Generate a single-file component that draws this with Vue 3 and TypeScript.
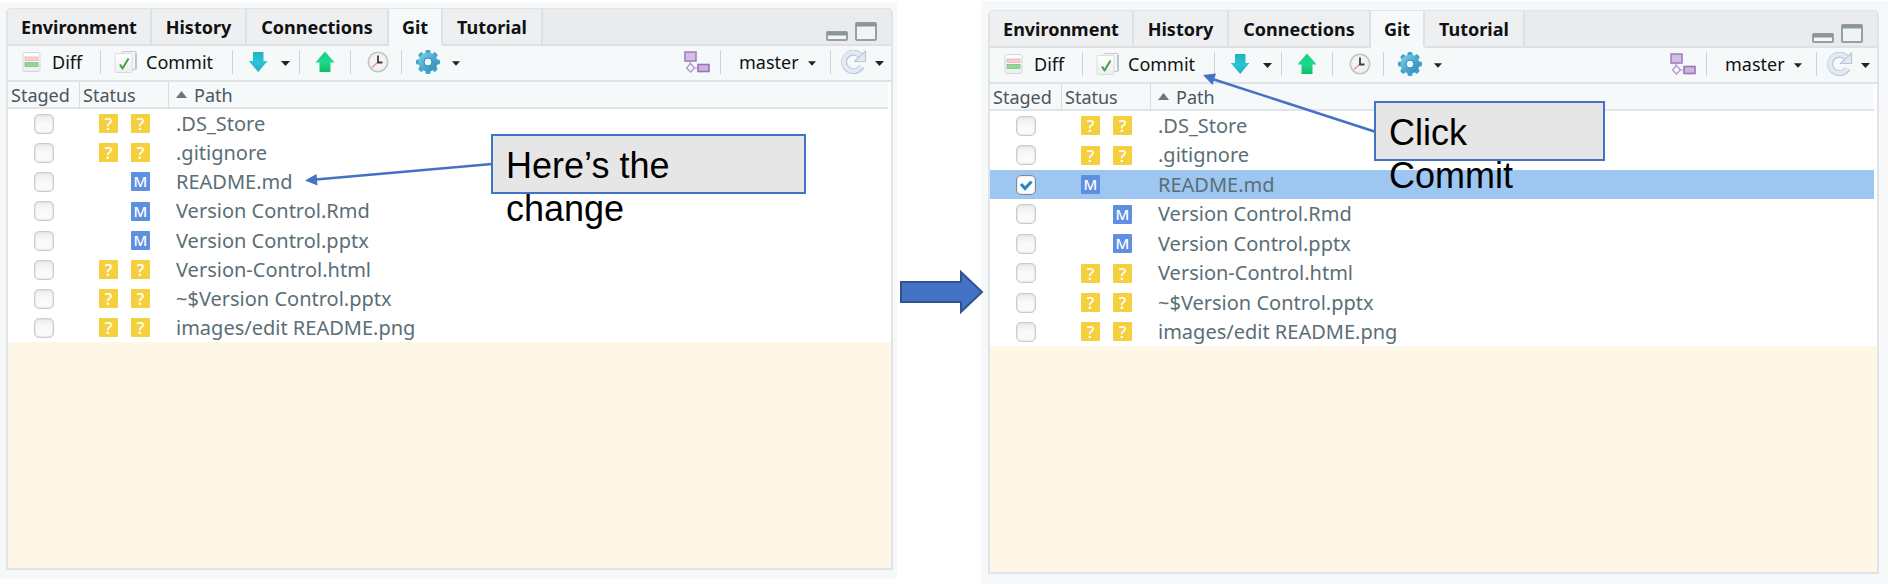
<script setup lang="ts">
import { reactive } from 'vue'

type Mark = '?' | 'M' | ''

interface FileRow {
  path: string
  marks: [Mark, Mark]
  staged: boolean
  selected?: boolean
}

interface Pane {
  id: string
  rows: FileRow[]
  note: string[]
}

const tabs = ['Environment', 'History', 'Connections', 'Git', 'Tutorial']

function files(readmeStaged: boolean): FileRow[] {
  return [
    { path: '.DS_Store', marks: ['?', '?'], staged: false },
    { path: '.gitignore', marks: ['?', '?'], staged: false },
    { path: 'README.md', marks: readmeStaged ? ['M', ''] : ['', 'M'], staged: readmeStaged, selected: readmeStaged },
    { path: 'Version Control.Rmd', marks: ['', 'M'], staged: false },
    { path: 'Version Control.pptx', marks: ['', 'M'], staged: false },
    { path: 'Version-Control.html', marks: ['?', '?'], staged: false },
    { path: '~$Version Control.pptx', marks: ['?', '?'], staged: false },
    { path: 'images/edit README.png', marks: ['?', '?'], staged: false },
  ]
}

const panes = reactive<Pane[]>([
  { id: 'before', rows: files(false), note: ['Here’s the', 'change'] },
  { id: 'after', rows: files(true), note: ['Click', 'Commit'] },
])
</script>

<template>
  <main class="slide">
    <svg class="defs" width="0" height="0" aria-hidden="true">
      <defs>
        <linearGradient id="teal" x1="0" y1="0" x2="0" y2="1">
          <stop offset="0" stop-color="#1cb4c0" /><stop offset="0.5" stop-color="#2cc4d2" /><stop offset="1" stop-color="#1eb0c4" />
        </linearGradient>
        <linearGradient id="green" x1="0" y1="0" x2="0" y2="1">
          <stop offset="0" stop-color="#12cf84" /><stop offset="0.5" stop-color="#1fd98a" /><stop offset="1" stop-color="#0fbf68" />
        </linearGradient>
        <linearGradient id="gear" x1="0" y1="0" x2="1" y2="1">
          <stop offset="0" stop-color="#7fd0ec" /><stop offset="1" stop-color="#2488b8" />
        </linearGradient>
        <linearGradient id="paper" x1="0" y1="0" x2="0" y2="1">
          <stop offset="0" stop-color="#ffffff" /><stop offset="1" stop-color="#eceff1" />
        </linearGradient>
      </defs>
    </svg>

    <template v-for="(pane, p) in panes" :key="pane.id">
      <div v-if="p > 0" class="between">
        <svg class="block-arrow" width="86" height="46" viewBox="0 0 86 46" aria-hidden="true">
          <path d="M1 13H61V3L82 23L61 43V33H1Z" fill="#4472c4" stroke="#2f528f" stroke-width="2" />
        </svg>
      </div>

      <section class="frame" :class="pane.id">
        <div class="panel">
          <nav class="tabs">
            <button v-for="t in tabs" :key="t" type="button" class="tab" :class="{ active: t === 'Git' }">{{ t }}</button>
            <span class="tab-rest">
              <button type="button" class="win" aria-label="Minimize">
                <svg width="22" height="10" viewBox="0 0 22 10"><rect x="1" y="1" width="20" height="8" rx="1" fill="#f4f6f7" stroke="#96a0a5" stroke-width="2" /><path d="M1 2.500H21" stroke="#8b969b" stroke-width="4" /></svg>
              </button>
              <button type="button" class="win" aria-label="Maximize">
                <svg width="22" height="19" viewBox="0 0 22 19"><rect x="1" y="1" width="20" height="17" rx="1" fill="#f1f4f5" stroke="#96a0a5" stroke-width="2" /><path d="M1 2.500H21" stroke="#8b969b" stroke-width="4" /></svg>
              </button>
            </span>
          </nav>

          <div class="toolbar">
            <button type="button" class="tool diff">
              <svg width="20" height="22" viewBox="0 0 20 22" aria-hidden="true">
                <rect x="1" y="1.500" width="17" height="19" rx="2" fill="url(#paper)" stroke="#d3d7da" />
                <rect x="3" y="6" width="13" height="3.500" fill="#f6cfcf" stroke="#eab5b5" stroke-width=".8" />
                <rect x="3" y="11.500" width="13" height="4" fill="#93d59a" stroke="#79c583" stroke-width=".8" />
              </svg>
              <span>Diff</span>
            </button>
            <i class="sep"></i>
            <button type="button" class="tool commit">
              <svg width="24" height="24" viewBox="0 0 24 24" aria-hidden="true">
                <rect x="8" y="1.500" width="14" height="18" rx="1" fill="#f3f5f7" stroke="#c3c9ce" />
                <path d="M22 3V19" stroke="#b4bbc3" stroke-width="1.500" />
                <rect x="1" y="3.500" width="17" height="19" rx="1" fill="url(#paper)" stroke="#d9dde0" />
                <path d="M6 14.500L8.500 18.500L14.500 8.500" fill="none" stroke="#43a047" stroke-width="2" stroke-linejoin="round" />
              </svg>
              <span>Commit</span>
            </button>
            <i class="sep"></i>
            <button type="button" class="tool pull" aria-label="Pull">
              <svg width="20" height="22" viewBox="0 0 20 22" aria-hidden="true"><path d="M5 1H15.500V10H19.500L10.200 21L.8 10H5Z" fill="url(#teal)" /></svg>
              <svg class="caret" width="9" height="5" viewBox="0 0 9 5" aria-hidden="true"><path d="M0 0H9L4.500 5Z" fill="#222" /></svg>
            </button>
            <i class="sep"></i>
            <button type="button" class="tool push" aria-label="Push">
              <svg width="20" height="22" viewBox="0 0 20 22" aria-hidden="true"><path d="M10 .5L19.600 11.500H15.500V21H4.500V11.500H.4Z" fill="url(#green)" /></svg>
            </button>
            <i class="sep"></i>
            <button type="button" class="tool history" aria-label="History">
              <svg width="22" height="22" viewBox="0 0 22 22" aria-hidden="true">
                <circle cx="11" cy="11" r="9.700" fill="#f4f4f4" stroke="#c2c5c7" stroke-width="1.600" />
                <circle cx="11" cy="11" r="7.600" fill="none" stroke="#dcdedf" stroke-dasharray="1 3" />
                <path d="M5 16.500L11 11" stroke="#ef8a8a" stroke-width="1.200" />
                <path d="M11 4.500V11.500H15.500" fill="none" stroke="#3c3c3c" stroke-width="1.800" />
              </svg>
            </button>
            <i class="sep"></i>
            <button type="button" class="tool more" aria-label="More">
              <svg width="26" height="26" viewBox="0 0 26 26" aria-hidden="true">
                <g fill="#3fa3cc">
                  <rect v-for="a in 4" :key="a" x="10.500" y="1" width="5" height="24" rx="1.500" :transform="`rotate(${a * 45} 13 13)`" />
                </g>
                <circle cx="13" cy="13" r="9.500" fill="url(#gear)" />
                <circle cx="13" cy="13" r="4" fill="#edf6fa" stroke="#2e89b3" />
              </svg>
              <svg class="caret" width="8" height="5" viewBox="0 0 9 5" aria-hidden="true"><path d="M0 0H9L4.500 5Z" fill="#222" /></svg>
            </button>

            <button type="button" class="tool branch" aria-label="New branch">
              <svg width="26" height="22" viewBox="0 0 26 22" aria-hidden="true">
                <path d="M6 10V15M10 17H14" stroke="#b79acb" stroke-width="1.200" />
                <rect x="1" y="1" width="11" height="9" fill="#d3bfe2" stroke="#a67fc0" stroke-width="1.600" />
                <path d="M6.500 12.500L10.500 17L6.500 21L2.500 17Z" fill="#faf7fc" stroke="#b596cb" stroke-width="1.300" />
                <rect x="14" y="13.500" width="11" height="7" fill="#ccb4dd" stroke="#9d74ba" stroke-width="1.600" />
              </svg>
            </button>
            <i class="sep"></i>
            <label class="tool ref">
              <select aria-label="Branch"><option>master</option></select>
              <svg class="caret" width="8" height="5" viewBox="0 0 9 5" aria-hidden="true"><path d="M0 0H9L4.500 5Z" fill="#222" /></svg>
            </label>
            <i class="sep"></i>
            <button type="button" class="tool refresh" aria-label="Refresh">
              <svg width="26" height="24" viewBox="0 0 26 24" aria-hidden="true">
                <path d="M20.600 16.500A9.300 9.300 0 1 1 19 5.300" fill="none" stroke="#bcc7d6" stroke-width="6" />
                <path d="M24.500 1V11.500H13.500Z" fill="#e3eaf4" stroke="#bcc7d6" stroke-width="1.200" stroke-linejoin="round" />
                <path d="M20.300 16.300A9.300 9.300 0 1 1 19.200 5.600" fill="none" stroke="#e3eaf4" stroke-width="4" />
              </svg>
              <svg class="caret" width="9" height="5" viewBox="0 0 9 5" aria-hidden="true"><path d="M0 0H9L4.500 5Z" fill="#222" /></svg>
            </button>
          </div>

          <div class="list">
            <table>
              <colgroup><col class="c-staged" /><col class="c-status" /><col /></colgroup>
              <thead>
                <tr>
                  <th scope="col">Staged</th>
                  <th scope="col">Status</th>
                  <th scope="col" class="sorted" aria-sort="ascending">
                    <svg width="11" height="7" viewBox="0 0 11 7" aria-hidden="true"><path d="M5.500 0L11 7H0Z" fill="#6b757b" /></svg>Path
                  </th>
                </tr>
              </thead>
              <tbody>
                <tr v-for="row in pane.rows" :key="row.path" :class="{ selected: row.selected }">
                  <td class="staged">
                    <label class="check">
                      <input v-model="row.staged" type="checkbox" :aria-label="`Stage ${row.path}`" />
                      <svg v-if="row.staged" width="20" height="20" viewBox="0 0 20 20" aria-hidden="true"><path d="M5 9L9 13.500L15.500 6.500" fill="none" stroke="#2386c8" stroke-width="3" /></svg>
                    </label>
                  </td>
                  <td class="status">
                    <div class="marks">
                      <span v-for="(m, i) in row.marks" :key="i" class="mark" :class="{ unknown: m === '?', modified: m === 'M' }">{{ m }}</span>
                    </div>
                  </td>
                  <td class="path">{{ row.path }}</td>
                </tr>
              </tbody>
            </table>
          </div>
          <div class="empty"></div>
        </div>

        <svg v-if="pane.id === 'before'" class="pointer" width="200" height="40" viewBox="0 0 200 40" aria-hidden="true">
          <path d="M188 12L12 27.500" stroke="#4472c4" stroke-width="2.500" />
          <path d="M1 28.500L12.500 22L13.500 33.500Z" fill="#4472c4" />
        </svg>
        <svg v-else class="pointer" width="180" height="70" viewBox="0 0 180 70" aria-hidden="true">
          <path d="M174 61L12 8.500" stroke="#4472c4" stroke-width="2.500" />
          <path d="M1 4L14 2.500L10.500 14Z" fill="#4472c4" />
        </svg>
        <aside class="note"><span v-for="line in pane.note" :key="line">{{ line }}</span></aside>
      </section>
    </template>
  </main>
</template>

<style>
body {
  background: #fff;
}
</style>

<style scoped>
.slide {
  display: flex;
  min-height: 100vh;
  box-sizing: border-box;
  font-family: "Noto Sans", "Open Sans", sans-serif;
  font-size: 18px;
  color: #111;
}
.defs {
  position: absolute;
}
.slide *,
.slide *::before {
  box-sizing: border-box;
}
.frame {
  position: relative;
  display: flex;
  min-width: 0;
  background: #f6f8fa;
}
.before {
  flex: 1 1 897px;
  margin: 2px 0 5px;
  padding: 6px 4px 9px 6px;
}
.after {
  flex: 1 1 907px;
  margin-top: 1px;
  padding: 9px 9px 10px 7px;
}
.between {
  flex: 0 0 84px;
  min-width: 0;
  display: flex;
  align-items: center;
  padding-left: 3px;
}
.block-arrow {
  position: relative;
  z-index: 2;
  flex: none;
}
.panel {
  flex: 1;
  min-width: 0;
  display: flex;
  flex-direction: column;
  border: 2px solid #e0e4e7;
  border-top-width: 1px;
  border-radius: 5px 5px 0 0;
  background: #f6f9fa;
  overflow: hidden;
}
button,
select {
  margin: 0;
  padding: 0;
  border: 0;
  background: none;
  font: inherit;
  color: inherit;
}
svg {
  display: block;
  flex: none;
}

.tabs {
  display: flex;
  height: 37px;
  background: #e9ebec;
}
.tab {
  flex: none;
  padding: 0;
  border-right: 2px solid #dde1e3;
  border-bottom: 2px solid #dde1e3;
  background: #eeeff1;
  font-weight: 700;
  text-align: center;
}
.tab:nth-child(1) {
  width: 144px;
}
.tab:nth-child(2) {
  width: 95px;
}
.tab:nth-child(3) {
  width: 142px;
}
.tab:nth-child(4) {
  width: 54px;
}
.tab:nth-child(5) {
  width: 100px;
}
.tab.active {
  background: #f6f9fa;
  border-bottom-color: #f6f9fa;
}
.tab-rest {
  flex: 1;
  display: flex;
  justify-content: flex-end;
  align-items: flex-end;
  gap: 7px;
  padding: 0 14px 3px 0;
  border-bottom: 2px solid #dde1e3;
}

.toolbar {
  display: flex;
  align-items: center;
  height: 36px;
  padding-bottom: 2px;
  border-bottom: 2px solid #dfe3e5;
}
.sep {
  flex: none;
  width: 1px;
  height: 24px;
  background: #cfd3d6;
}
.tool {
  flex: none;
  display: flex;
  align-items: center;
  height: 100%;
}
.diff {
  width: 92px;
  padding-left: 14px;
  gap: 10px;
}
.commit {
  width: 131px;
  padding-left: 13px;
  gap: 8px;
}
.pull {
  width: 66px;
  padding-left: 15px;
  gap: 13px;
}
.push {
  width: 50px;
  padding-left: 15px;
}
.history {
  width: 50px;
  padding-left: 16px;
}
.more {
  padding-left: 13px;
  gap: 11px;
}
.branch {
  margin-left: auto;
  padding-right: 10px;
}
.ref {
  width: 109px;
  padding: 0 14px 0 18px;
  justify-content: space-between;
}
.ref select {
  appearance: none;
}
.refresh {
  padding: 0 7px 0 10px;
  gap: 8px;
}
.caret {
  margin-top: 2px;
}

.list {
  padding-right: 3px;
  background: #fff;
}
table {
  width: 100%;
  table-layout: fixed;
  border-collapse: separate;
  border-spacing: 0;
}
.c-staged {
  width: 71px;
}
.c-status {
  width: 89px;
}
th {
  height: 27px;
  padding: 0 0 0 3px;
  border-bottom: 2px solid #e0e4e6;
  background: #f6f9fa;
  color: #4b555b;
  font-weight: 400;
  line-height: 24px;
  text-align: left;
  white-space: nowrap;
}
th + th {
  border-left: 1px solid #d9dddf;
}
.sorted {
  padding-left: 7px;
}
.sorted svg {
  display: inline-block;
  margin-right: 7px;
  vertical-align: 4px;
}
td {
  height: 29px;
  padding: 0;
}
.before tr:nth-child(4) td,
.after tr:nth-child(2) td,
.after tr:nth-child(4) td,
.after tr:nth-child(6) td {
  height: 30px;
}
.staged {
  padding-left: 26px;
}
.check {
  position: relative;
  display: block;
  width: 20px;
  height: 20px;
}
.check input {
  appearance: none;
  display: block;
  width: 20px;
  height: 20px;
  margin: 0;
  border: 1px solid #c9cbcd;
  border-radius: 5px;
  background: linear-gradient(#ececee, #fafafb 50%);
  box-shadow: inset 0 0 2px #c4c6c8;
}
.check input:checked {
  border-color: #7d8a96;
  background: #fff;
}
.check svg {
  position: absolute;
  inset: 0;
  pointer-events: none;
}
.marks {
  display: flex;
  gap: 13px;
  padding-left: 20px;
}
.mark {
  width: 19px;
  height: 19px;
  border-radius: 1px;
  color: #fff;
  font-size: 15px;
  font-weight: 500;
  line-height: 19px;
  text-align: center;
}
.unknown {
  background: #f4d03f;
  font-size: 17px;
}
.modified {
  background: #5f8fe0;
}
.path {
  padding-left: 8px;
  color: #5b6e76;
  font-size: 20px;
  line-height: 28px;
  white-space: nowrap;
}
.selected td {
  background: #9dc7f1;
}
.empty {
  flex: 1;
  background: #fef6e6;
}

.pointer,
.note {
  position: absolute;
  z-index: 3;
}
.before .pointer {
  left: 304px;
  top: 150px;
}
.after .pointer {
  left: 221px;
  top: 70px;
}
.note {
  height: 60px;
  padding: 8px 13px;
  border: 2px solid #4472c4;
  background: #e6e6e6;
  color: #000;
  font-family: "Liberation Sans", Arial, sans-serif;
  font-size: 36px;
  line-height: 43px;
}
.note span {
  display: block;
}
.before .note {
  left: 491px;
  top: 132px;
  width: 315px;
}
.after .note {
  left: 393px;
  top: 100px;
  width: 231px;
}
</style>
